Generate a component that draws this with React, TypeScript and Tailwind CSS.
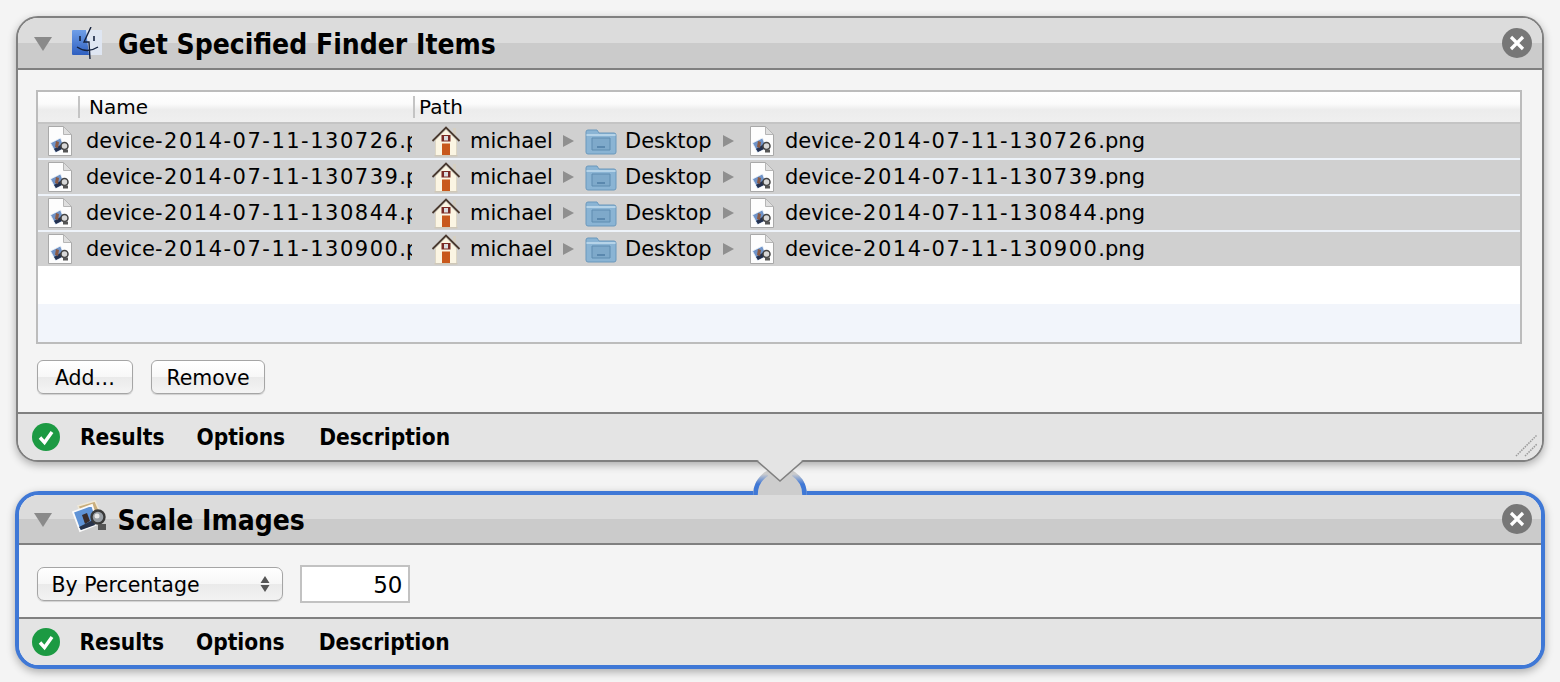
const files = ['130726', '130739', '130844', '130900'];

function DocIcon() {
  return (
    <svg width="26" height="32" viewBox="0 0 26 32" className="shrink-0">
      <path d="M1.500 1.500h15l8 8v21h-23z" fill="#fdfdfd" stroke="#a9a9a9" />
      <path d="M16.500 1.500v8h8z" fill="#dedede" stroke="#b5b5b5" />
      <path d="M3.500 18l10-5 4 10-9 4.500z" fill="#6f93c8" stroke="#eef2f8" strokeWidth=".8" />
      <path d="M7 24l8-5 2 4-8 4z" fill="#24314f" />
      <path d="M9 16l3 1-1 6-3-1z" fill="#8a5a44" />
      <circle cx="17.500" cy="21" r="3.500" fill="#d8d8d8" stroke="#444" strokeWidth="1.500" />
      <path d="M16 24.500h5v3h-5z" fill="#555" />
    </svg>
  );
}

function HomeIcon() {
  return (
    <svg width="30" height="32" viewBox="0 0 30 32" className="shrink-0">
      <rect x="22" y="3" width="3" height="7" fill="#d6d0c2" />
      <path d="M4.500 15L15 4.500 25.500 15v15.500h-21z" fill="#fbf5e3" stroke="#d6cdb6" strokeWidth=".6" />
      <path d="M1.500 16L15 2.500 28.500 16" fill="none" stroke="#4a3a30" strokeWidth="1.800" />
      <rect x="10.500" y="10" width="9" height="6.500" fill="#7a2a25" />
      <rect x="13" y="11" width="4" height="4.500" fill="#d9dde0" />
      <rect x="11" y="18.500" width="8" height="12" fill="#c8581c" />
      <rect x="3.500" y="30" width="23" height="1.500" fill="#cfc8b8" />
    </svg>
  );
}

function FolderIcon() {
  return (
    <svg width="32" height="28" viewBox="0 0 32 28" className="shrink-0">
      <path d="M1 5q0-2 2-2h9l2 3h15q2 0 2 2v17q0 2-2 2H3q-2 0-2-2z" fill="#8ab4d4" stroke="#6b98bc" />
      <rect x="1.500" y="7" width="29" height="2" fill="#b5d3e8" />
      <path d="M7 11h18v12H7z" fill="#7ea9ca" stroke="#5e8cb0" />
      <path d="M12 20h8" stroke="#4f7ea4" strokeWidth="1.500" />
    </svg>
  );
}

function PathArrow() {
  return (
    <svg width="11" height="12" viewBox="0 0 11 12" className="shrink-0">
      <path d="M0 0l11 6-11 6z" fill="#8f8f8f" />
    </svg>
  );
}

function FinderIcon() {
  return (
    <svg width="30" height="32" viewBox="0 0 30 32">
      <defs>
        <linearGradient id="finderBlue" x1="0" y1="0" x2="0" y2="1">
          <stop offset="0" stopColor="#6f9fe8" />
          <stop offset="1" stopColor="#2f5fc0" />
        </linearGradient>
      </defs>
      <rect x="0" y="3" width="30" height="25" rx="1" fill="url(#finderBlue)" />
      <path d="M14 3h16v25H17z" fill="#dfe6f2" />
      <path d="M19 0l-7 15h5l1 17" fill="none" stroke="#16233f" strokeWidth="1.400" />
      <path d="M8 9v5M22 9v5" stroke="#16233f" strokeWidth="1.600" />
      <path d="M5 20q10 7 21 0" fill="none" stroke="#16233f" strokeWidth="1.400" />
    </svg>
  );
}

function PreviewIcon() {
  return (
    <svg width="36" height="34" viewBox="0 0 36 34">
      <path d="M6 6l17-5 4 9-17 6z" fill="#c9ae7c" stroke="#efe8d8" strokeWidth="1.500" />
      <path d="M1 12L20 5l6 19-18 7z" fill="#5f93d6" stroke="#fafafa" strokeWidth="1.800" />
      <path d="M7 27l14-7 2 5-14 5z" fill="#27324a" />
      <path d="M10 15l5-2 3 8-5 3z" fill="#3a2c2a" />
      <circle cx="26" cy="17" r="6.500" fill="#9aa0a6" stroke="#3a3a3a" strokeWidth="2.400" />
      <circle cx="25" cy="16" r="2.500" fill="#e8e8e8" />
      <path d="M26 24h8v6h-8z" fill="#555" />
    </svg>
  );
}

function CheckBadge() {
  return (
    <svg width="28" height="28" viewBox="0 0 28 28" className="shrink-0">
      <circle cx="14" cy="14" r="14" fill="#1c9a43" />
      <path d="M8 14.500l4.500 5L20 9" fill="none" stroke="#fff" strokeWidth="3.400" />
    </svg>
  );
}

function CloseButton() {
  return (
    <svg width="30" height="30" viewBox="0 0 30 30" className="shrink-0">
      <circle cx="15" cy="15" r="15" fill="#777777" />
      <path d="M9 9l12 12M21 9L9 21" stroke="#fff" strokeWidth="3.200" />
    </svg>
  );
}

function TitleBar({ title, icon, selected }: { title: string; icon: React.ReactNode; selected?: boolean }) {
  return (
    <div className={`flex ${selected ? 'h-[48px] pl-[14.500px] pr-[9px]' : 'h-[50px] pl-[16px] pr-[10px]'} box-content items-center border-b-2 border-[#808080] bg-[linear-gradient(#dcdcdc_0,#dcdcdc_50%,#cbcbcb_50%,#cbcbcb_100%)]`}>
      <svg width="18" height="14" viewBox="0 0 18 14" className="mt-[2px] shrink-0">
        <path d="M0 0h18L9 14z" fill="#8a8a8a" />
      </svg>
      <div className={`${selected ? 'ml-[20px] mt-[-4px]' : 'ml-[20px]'} flex w-[46px] shrink-0`}>{icon}</div>
      <span className="pt-[4px] font-['DejaVu_Sans_Condensed',sans-serif] text-[28px] font-bold leading-none text-black">{title}</span>
      <div className="ml-auto">
        <CloseButton />
      </div>
    </div>
  );
}

function FooterBar({ grip, selected }: { grip?: boolean; selected?: boolean }) {
  return (
    <div className={`relative flex h-full items-center border-t-2 border-[#808080] bg-[#e4e4e4] ${selected ? 'pl-[12.500px]' : 'pl-[14px]'} font-['DejaVu_Sans_Condensed',sans-serif] text-[22.500px] font-bold leading-none text-black`}>
      <CheckBadge />
      <span className="ml-[20px]">Results</span>
      <span className="ml-[32px]">Options</span>
      <span className="ml-[34px]">Description</span>
      {grip && (
        <svg width="24" height="24" viewBox="0 0 24 24" className="absolute bottom-[2px] right-[3px]">
          <path d="M1 22L22 1M10 22L22 10" stroke="#9a9a9a" strokeWidth="1.500" strokeDasharray="1.500 1" />
        </svg>
      )}
    </div>
  );
}

function MacButton({ label, width }: { label: string; width: string }) {
  return (
    <button className={`${width} h-[34px] rounded-[6px] border border-[#a5a5a5] bg-[linear-gradient(#ffffff,#f7f7f7_50%,#eaeaea_50%,#f4f4f4)] pt-[3px] text-[20.500px] leading-none text-black shadow-[0_1px_1px_rgba(0,0,0,0.15)]`}>
      {label}
    </button>
  );
}

function FileName({ id }: { id: string }) {
  return (
    <>
      device<span className="tracking-[1.500px]">-2014-07-11-{id}</span>.png
    </>
  );
}

function FileRow({ id }: { id: string }) {
  return (
    <div className="flex h-[34px] items-center bg-[#d0d0d0] pl-[9px] text-[21px] leading-none text-black">
      <DocIcon />
      <div className="ml-[13px] w-[326px] shrink-0 overflow-hidden whitespace-nowrap">
        <FileName id={id} />
      </div>
      <div className="ml-[19px] flex w-[30px] shrink-0">
        <HomeIcon />
      </div>
      <span className="ml-[9px] w-[81px] shrink-0">michael</span>
      <div className="ml-[12px]">
        <PathArrow />
      </div>
      <div className="ml-[11px]">
        <FolderIcon />
      </div>
      <span className="ml-[8px] w-[86px] shrink-0">Desktop</span>
      <div className="ml-[12px]">
        <PathArrow />
      </div>
      <div className="ml-[15px]">
        <DocIcon />
      </div>
      <span className="ml-[10px] whitespace-nowrap">
        <FileName id={id} />
      </span>
    </div>
  );
}

export default function App() {
  return (
    <div className="h-[682px] w-[1560px] overflow-hidden bg-[#f4f4f4] pl-[16px] pt-[16px] font-['DejaVu_Sans',sans-serif]">
      {/* first action */}
      <div className="relative z-10 flex h-[446px] w-[1528px] flex-col overflow-visible">
        <div className="flex h-full flex-col overflow-hidden rounded-[22px] border-2 border-[#808080] bg-[#f4f4f4] shadow-[0_3px_8px_rgba(0,0,0,0.3)]">
          <TitleBar title="Get Specified Finder Items" icon={<FinderIcon />} />
          <div className="flex h-[342px] flex-col pl-[18px] pr-[20px] pt-[20px]">
            <div className="flex h-[254px] flex-col border-2 border-[#bcbcbc] bg-white">
              <div className="box-content flex h-[30px] items-center border-b-2 border-[#c4c4c4] bg-[linear-gradient(#ffffff,#fbfbfb_40%,#ececec_60%,#efefef)] text-[20px] leading-none text-black">
                <div className="ml-[40px] h-[22px] w-[2px] bg-[#c4c4c4]" />
                <span className="ml-[9px] w-[324px]">Name</span>
                <div className="h-[22px] w-[2px] bg-[#c4c4c4]" />
                <span className="ml-[4px]">Path</span>
              </div>
              <div className="flex flex-col gap-[2px] bg-[#eef3fa]">
                {files.map((id) => (
                  <FileRow key={id} id={id} />
                ))}
              </div>
              <div className="h-[38px] bg-white" />
              <div className="flex-1 bg-[#f2f5fb]" />
            </div>
            <div className="ml-[1px] mt-[16px] flex gap-[18px]">
              <MacButton label="Add…" width="w-[96px]" />
              <MacButton label="Remove" width="w-[114px]" />
            </div>
          </div>
          <div className="flex-1">
            <FooterBar grip />
          </div>
        </div>
        <svg width="52" height="24" viewBox="0 0 52 24" className="absolute left-[738px] top-[444px]">
          <path d="M0 0h4l22 20L48 0h4v-2H0z" fill="#e4e4e4" />
          <path d="M0 .5h2.500L26 21 49.500 .5H52" fill="#e4e4e4" stroke="#808080" strokeWidth="1.600" />
        </svg>
      </div>

      {/* second action, selected */}
      <div className="relative ml-[-1px] mt-[29px] flex h-[178px] w-[1530px] flex-col">
        <svg width="60" height="26" viewBox="0 0 60 26" className="absolute left-[735px] top-[-22px]">
          <defs>
            <linearGradient id="arcFade" gradientUnits="userSpaceOnUse" x1="0" y1="5" x2="0" y2="15">
              <stop offset="0" stopColor="#3f78d6" stopOpacity="0" />
              <stop offset="1" stopColor="#3f78d6" />
            </linearGradient>
          </defs>
          <path d="M3 26v-.5a27 27 0 0 1 54 0v.5z" fill="#cdcdcd" />
          <path d="M5.500 27v-1.500A24.500 24.500 0 0 1 17 4.700M43 4.700a24.500 24.500 0 0 1 11.500 20.800V27" fill="none" stroke="url(#arcFade)" strokeWidth="4.600" />
        </svg>
        <div className="flex h-full flex-col overflow-hidden rounded-[24px] border-[4.500px] border-[#3f78d6] bg-[#f4f4f4] shadow-[0_3px_8px_rgba(0,0,0,0.3)]">
          <TitleBar title="Scale Images" icon={<PreviewIcon />} selected />
          <div className="flex h-[72px] items-center px-[17.500px] pt-[5px]">
            <div className="flex h-[34px] w-[246px] items-center justify-between rounded-[7px] border border-[#a5a5a5] bg-[linear-gradient(#ffffff,#f7f7f7_50%,#eaeaea_50%,#f2f2f2)] pl-[14px] pr-[12px] text-[20.500px] leading-none text-black shadow-[0_1px_1px_rgba(0,0,0,0.15)]">
              <span className="pt-[3px]">By Percentage</span>
              <svg width="10" height="20" viewBox="0 0 10 20">
                <path d="M5 2l4.500 7h-9zM5 18L.5 11h9z" fill="#555" />
              </svg>
            </div>
            <div className="ml-[17px] flex h-[38px] w-[110px] items-center justify-end border-2 border-[#c2c2c2] bg-white pr-[5px] pt-[3px] text-[23px] leading-none text-black">
              50
            </div>
          </div>
          <div className="flex-1">
            <FooterBar selected />
          </div>
        </div>
      </div>
    </div>
  );
}
